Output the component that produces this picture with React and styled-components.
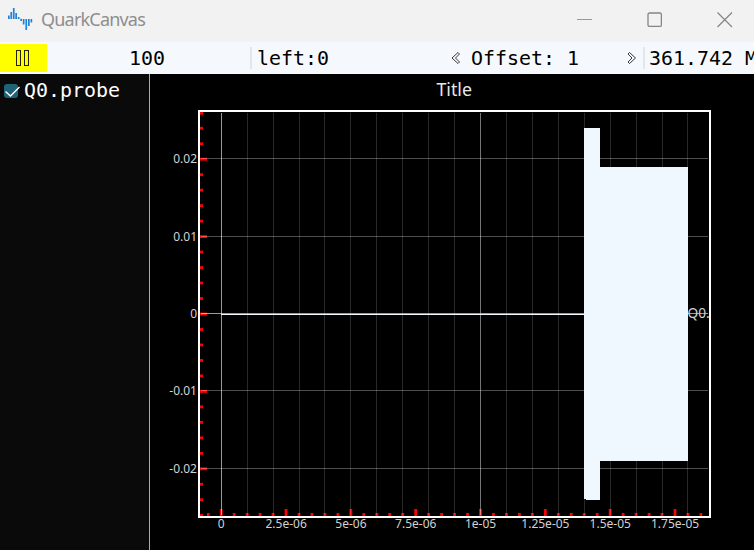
import React from "react";
import styled, { createGlobalStyle } from "styled-components";

const Global = createGlobalStyle`
  * { box-sizing: border-box; }
  body { margin: 0; overflow: hidden; background: #000; }
`;
const Window = styled.div`
  width: 754px; height: 550px; overflow: hidden;
  display: flex; flex-direction: column; background: #000;
`;
const TitleBar = styled.header`
  height: 42px; flex: none; background: #f2f2f2;
  display: flex; align-items: center; justify-content: space-between;
`;
const Brand = styled.div`
  display: flex; align-items: center; gap: 8px; padding: 0 0 4px 8px;
  color: #8e8e8e; font: 18px/24px "Noto Sans", "Open Sans", sans-serif;
  svg { display: block; }
  span { display: block; letter-spacing: -0.8px; }
`;
const Controls = styled.div`
  display: flex; gap: 55px; padding: 0 21px 3px 0;
  svg { display: block; }
`;
const Toolbar = styled.div`
  height: 32px; flex: none; background: #f5f9fd;
  display: flex; align-items: center; overflow: hidden;
  color: #000; font: 19.93px/24px "DejaVu Sans Mono", monospace; white-space: pre;
`;
const PauseButton = styled.button`
  width: 47px; height: 28px; flex: none; border: 0; padding: 0 1px 0 0;
  background: #ff0; display: grid; place-items: center;
`;
const Cell = styled.div`
  width: ${(p) => p.$width}px; flex: none; padding-top: 2px;
  padding-left: ${(p) => p.$indent || 0}px;
  padding-right: ${(p) => p.$trail || 0}px;
  text-align: ${(p) => p.$align || "left"};
`;
const Divider = styled.div`
  width: 2px; height: 22px; flex: none; background: #e3e7ea;
`;
const Arrow = styled.svg`
  display: block; flex: none; fill: none; stroke: #222; stroke-width: 0.9;
`;
const Body = styled.main`
  flex: 1; display: flex; min-height: 0;
`;
const Sidebar = styled.aside`
  width: 150px; flex: none; background: #0a0a0a; border-right: 1px solid #aaa;
  padding: 4px 0 0 4px;
`;
const Trace = styled.div`
  display: flex; align-items: center; gap: 3px; color: #fff;
  font: 19.93px/24px "DejaVu Sans Mono", monospace;
  svg { display: block; }
  span { display: block; padding-top: 1px; }
`;
const Plot = styled.svg`
  display: block; flex: none;
  text { font-family: "Noto Sans", "Open Sans", sans-serif; fill: #d2d2d2; }
  .title { fill: #e8e8e8; }
`;

const range = (a, b) => Array.from({ length: b - a + 1 }, (_, i) => a + i);
const X0 = 221, X_STEP = 12.965, Y0 = 314, Y_STEP = 15.48;
const X_LABELS = ["0", "2.5e-06", "5e-06", "7.5e-06", "1e-05", "1.25e-05", "1.5e-05", "1.75e-05"];
const Y_LABELS = [["0.02", 158], ["0.01", 236], ["0", 313], ["-0.01", 390], ["-0.02", 468]];

function Chart() {
  return (
    <Plot width="604" height="476" viewBox="150 74 604 476">
      <text className="title" x="454.2" y="96.3" fontSize="17.8" textAnchor="middle">Title</text>
      <g fill="#f00">
        {range(-12, 13).map((i) => (
          <rect key={i} x="200" y={Math.max(112, Y0 - i * Y_STEP - 1.4)} width={i % 5 ? 3 : 7} height="2.8" />
        ))}
        <rect x="200" y="514" width="3" height="2" />
        {range(-1, 37).map((i) => (
          <rect key={i} x={X0 + i * X_STEP - 1.2} y={i % 5 ? 513 : 509} width="2.8" height={i % 5 ? 3 : 7} />
        ))}
      </g>
      <g shapeRendering="crispEdges">
        {range(0, 18).map((i) => (
          <rect key={i} x={Math.floor(X0 + i * 25.93 + 0.25)} y="113" width="1" height="402"
            fill="#fff" fillOpacity={i === 0 ? 0.6 : i === 10 ? 0.46 : 0.16} />
        ))}
        {Y_LABELS.map(([label, y]) => (
          <rect key={label} x="201" y={y} width="507" height="1" fill="#fff" fillOpacity={label === "0" ? 0.6 : 0.31} />
        ))}
        <rect x="221" y="314" width="363" height="1" fill="#f0f8ff" />
        <path d="M584 128H600V167H688V461H600V500H586V499H584Z" fill="#f0f8ff" />
        <rect x="199" y="111" width="511" height="406" fill="none" stroke="#fff" strokeWidth="2" />
      </g>
      {Y_LABELS.map(([label, y]) => (
        <text key={label} x="197" y={y + 4.5} fontSize="12" textAnchor="end">{label}</text>
      ))}
      {X_LABELS.map((label, i) => (
        <text key={label} x={X0 + 0.3 + i * 64.82} y="528" fontSize="12" textAnchor="middle">{label}</text>
      ))}
      <text x="687.5" y="318" fontSize="13.7">Q0.</text>
    </Plot>
  );
}

/* x, top and height of each bar in the app logo */
const BARS = [
  [8, 15.5, 3.5], [10.4, 12, 7], [12.9, 8, 11], [15.3, 13, 6], [17.8, 17, 2],
  [20.3, 18.8, 2.2], [22.8, 19, 5.5], [25.4, 19, 11], [28, 19, 7], [30.5, 19, 3.5],
];

export default function App() {
  return (
    <>
      <Global />
      <Window>
        <TitleBar>
          <Brand>
            <svg width="25" height="24" viewBox="8 7 25 24" fill="#1f83d8">
              {BARS.map(([x, y, h]) => <rect key={x} x={x} y={y} width="1.7" height={h} />)}
            </svg>
            <span>QuarkCanvas</span>
          </Brand>
          <Controls>
            <svg width="16" height="16" stroke="#999"><path d="M1 7.5H16" /></svg>
            <svg width="15" height="16" fill="none" stroke="#858585" strokeWidth="1.3"><rect x="1" y="1" width="13.4" height="13.4" rx="1.5" /></svg>
            <svg width="16" height="16" stroke="#858585" strokeWidth="1.2"><path d="M.5 .5L15 15M15 .5L.5 15" /></svg>
          </Controls>
        </TitleBar>
        <Toolbar>
          <PauseButton>
            <svg width="14" height="18" fill="none" stroke="#222200" shapeRendering="crispEdges">
              <rect x=".5" y="1.5" width="4" height="15" /><rect x="8.5" y="1.5" width="4" height="15" />
            </svg>
          </PauseButton>
          <Cell $width={203} $trail={3} $align="center">100</Cell>
          <Divider />
          <Cell $width={198} $indent={5}>left:0</Cell>
          <Arrow width="12" height="14"><path d="M8 1.5L2 7L8 12.5L9.5 11L5.5 7L9.5 3Z" /></Arrow>
          <Cell $width={165} $indent={9}>Offset: 1</Cell>
          <Arrow width="16" height="14"><path d="M2.5 1.5L8.5 7L2.5 12.5L1 11L5 7L1 3Z" /></Arrow>
          <Divider />
          <Cell $width={140} $indent={4}>361.742 MB</Cell>
        </Toolbar>
        <Body>
          <Sidebar>
            <Trace>
              <svg width="17" height="14"><rect width="14" height="14" rx="3" fill="#1f6377" /><path d="M1.5 7.5L6.5 12L15.5 3" fill="none" stroke="#fff" strokeWidth="1.4" /></svg>
              <span>Q0.probe</span>
            </Trace>
          </Sidebar>
          <Chart />
        </Body>
      </Window>
    </>
  );
}
